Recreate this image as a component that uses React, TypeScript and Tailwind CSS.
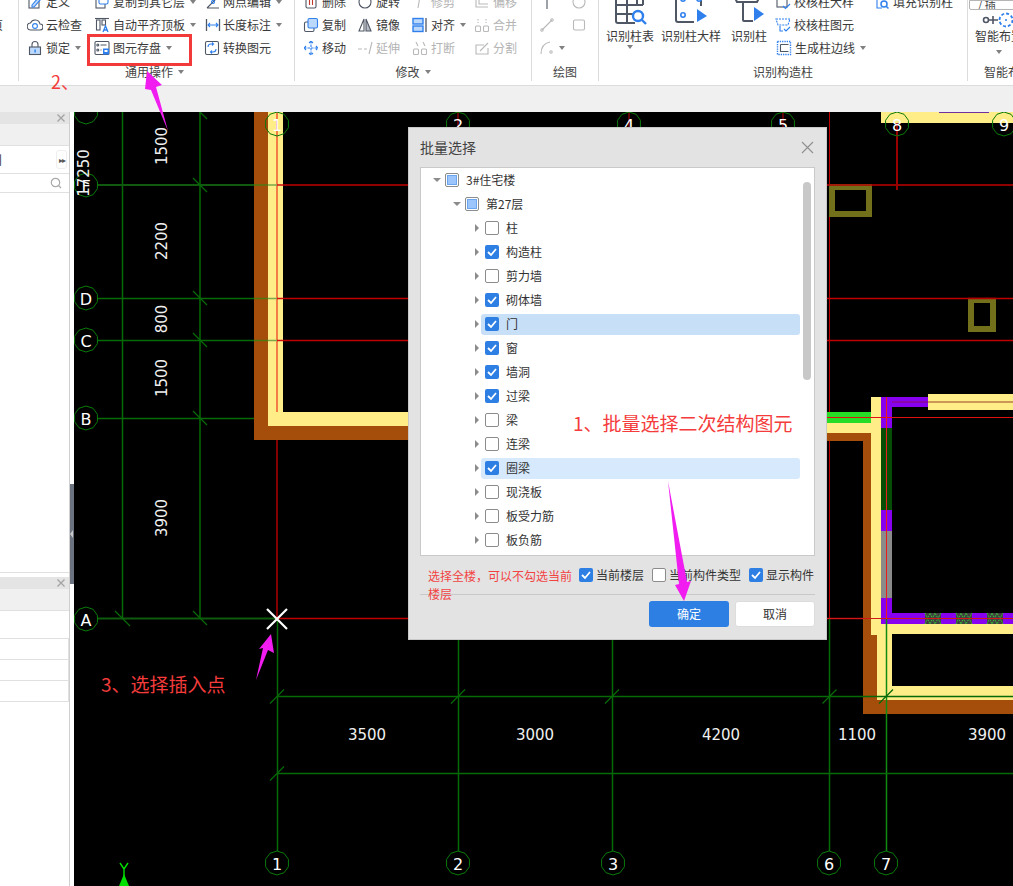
import type { ReactNode } from 'react';

const D = '#4f5764';
const B = '#2f80ed';
const L = '#bcd8fa';
const G = '#b9b9b9';
const GREEN = '#066a06';
const RED = '#c00000';

function Ic({ children, size = 16 }: { children: ReactNode; size?: number }) {
  return (
    <svg width={size} height={size} viewBox="0 0 16 16" fill="none" strokeWidth="1.1">
      {children}
    </svg>
  );
}

function Caret() {
  return <span className="ml-[5px] inline-block w-0 h-0 border-x-[3px] border-t-[4px] border-x-transparent border-t-[#808080]" />;
}

function Tool({ icon, label, caret, gray }: { icon?: ReactNode; label?: string; caret?: boolean; gray?: boolean }) {
  return (
    <div className="flex items-center h-[23px] whitespace-nowrap">
      <span className="w-[18px] h-[16px] mr-[2px] flex items-center justify-center">{icon}</span>
      <span className={gray ? 'text-[#b4b4b4]' : 'text-[#3a3a3a]'}>{label}</span>
      {caret && <Caret />}
    </div>
  );
}

function BigTool({ icon, label, w, caret, caretGap }: { icon: ReactNode; label: string; w: string; caret?: boolean; caretGap?: string }) {
  return (
    <div className={`${w} shrink-0 flex flex-col items-center whitespace-nowrap`}>
      <div className="h-[38px] shrink-0 flex items-end justify-center">{icon}</div>
      <div className="h-[16px] shrink-0 leading-[16px] text-[#3a3a3a]">{label}</div>
      {caret && (
        <div className={`h-[6px] shrink-0 flex justify-center -ml-[5px] ${caretGap ?? 'mt-[1px]'}`}>
          <Caret />
        </div>
      )}
    </div>
  );
}

function Group({ w, label, caret, children, last, labelClass }: { w: string; label?: string; caret?: boolean; children?: ReactNode; last?: boolean; labelClass?: string }) {
  return (
    <div className={`${w} shrink-0 h-[81px] ${last ? '' : 'border-r border-[#dcdcdc]'}`}>
      <div className="h-[59px] -mt-[10px] flex">{children}</div>
      <div className={`h-[26px] mt-[10px] flex items-center justify-center text-[#444] ${labelClass ?? ''}`}>
        {label}
        {caret && <Caret />}
      </div>
    </div>
  );
}

const icons = {
  define: <Ic><rect x="2" y="2" width="10" height="12" stroke={D} /><path d="M5 11l7-8 2 2-7 8H5z" stroke={B} fill={L} /></Ic>,
  cloud: <Ic><path d="M4 13a3.5 3.5 0 01-.5-7A5 5 0 0113 7a3 3 0 010 6z" stroke={D} /><circle cx="8" cy="9" r="2.4" stroke={B} /></Ic>,
  lock: <Ic><path d="M5 7V4.5a3 3 0 016 0V7" stroke={D} /><rect x="2.5" y="7" width="11" height="7.5" fill={L} stroke={D} /><rect x="7.4" y="9.5" width="1.4" height="3" fill={B} /></Ic>,
  copyLayer: <Ic><rect x="2" y="5" width="9" height="9" fill="#fff" stroke={D} /><rect x="5" y="1" width="9" height="9" rx="1.5" fill="#fff" stroke={B} /></Ic>,
  alignTop: <Ic><path d="M1 1.5h14" stroke={D} /><rect x="2.5" y="3" width="3.5" height="10" stroke={D} /><rect x="8" y="3" width="3.5" height="5" stroke={D} /><path d="M9 15l2.5-6 2.5 6M10 13h3" stroke={B} strokeWidth="1.3" /></Ic>,
  save: <Ic><rect x="1" y="1.5" width="14" height="13" rx="1" stroke={D} /><circle cx="3.8" cy="5" r="1" stroke={D} /><circle cx="3.8" cy="10" r="1" stroke={D} /><path d="M6.5 5h6M6.5 10h1" stroke={D} /><rect x="9" y="8.5" width="6" height="6" fill={B} /><rect x="10.5" y="10" width="3" height="2" fill="#fff" /></Ic>,
  axis: <Ic><path d="M2 14L14 2M2 14h12" stroke={D} /><circle cx="8" cy="8" r="1.5" stroke={B} /></Ic>,
  length: <Ic><path d="M1.5 2v12M14.5 2v12" stroke={D} strokeWidth="1.3" /><path d="M3 8h10M5 6L3 8l2 2M11 6l2 2-2 2" stroke={B} /></Ic>,
  convert: <Ic><rect x="1.5" y="1.5" width="13" height="13" rx="1.5" stroke={D} /><path d="M4 7a3 3 0 013-3h2M8 2.5L9.5 4 8 5.5M12 9a3 3 0 01-3 3H7M8 10.5L6.5 12 8 13.5" stroke={B} /></Ic>,
  del: <Ic><rect x="3" y="2" width="10" height="12" rx="1.5" stroke={D} /><path d="M6.5 4v7M9.5 4v7" stroke="#c0392b" /></Ic>,
  rotate: <Ic><circle cx="8" cy="8" r="6" stroke={D} /></Ic>,
  trim: <Ic><path d="M2 4h9M8 2l-2 12" stroke={G} /></Ic>,
  offset: <Ic><path d="M2 3v10h12M5 3v7h9" stroke={G} /></Ic>,
  copy: <Ic><rect x="1.5" y="5" width="9.5" height="9.5" rx="1.5" fill="#fff" stroke={D} /><rect x="5" y="1.5" width="9.5" height="9.5" rx="1.5" fill={L} stroke={B} /></Ic>,
  mirror: <Ic><path d="M7 2L2 14h5z" stroke={D} /><path d="M9 2l5 12H9z" fill="#b8bcc4" stroke={D} /></Ic>,
  align: <Ic><rect x="1" y="1.5" width="10" height="5.5" fill={L} stroke={B} strokeWidth="1.4" /><rect x="1" y="9" width="10" height="5.5" fill={L} stroke={B} strokeWidth="1.4" /><path d="M14 1v14" stroke={D} strokeWidth="1.3" /></Ic>,
  merge: <Ic><rect x="1.5" y="9" width="5" height="5.5" rx="1" stroke={G} /><rect x="9.5" y="9" width="5" height="5.5" rx="1" stroke={G} /><path d="M4 2v4M12 2v4" stroke={G} strokeDasharray="1.5 1.5" /></Ic>,
  move: <Ic><path d="M8 1v14M1 8h14M6 3l2-2 2 2M6 13l2 2 2-2M3 6L1 8l2 2M13 6l2 2-2 2" stroke={B} strokeDasharray="2.5 1" /></Ic>,
  extend: <Ic><path d="M1 9h4M7 9h3M15 2l-3 12" stroke={G} /></Ic>,
  breakIt: <Ic><rect x="1.5" y="9" width="5" height="5.5" rx="1" stroke={G} /><rect x="9.5" y="9" width="5" height="5.5" rx="1" stroke={G} /><path d="M4 2l2 4M11 2l2 4" stroke={G} /></Ic>,
  split: <Ic><path d="M14 8v6H2V5h8" stroke={G} /><path d="M6 11l8-8" stroke={G} /></Ic>,
  point: <Ic><path d="M1 3h14M8 1v14" stroke={D} /><circle cx="8" cy="3" r="2.2" fill={B} /></Ic>,
  circle: <Ic><circle cx="8" cy="8" r="6" stroke={G} /></Ic>,
  line: <Ic><path d="M3 13L13 3" stroke={G} /><circle cx="3" cy="13" r="1.2" stroke={G} /><circle cx="13" cy="3" r="1.2" stroke={G} /></Ic>,
  rect: <Ic><rect x="2.5" y="3" width="11" height="10" rx="1.5" stroke={G} /></Ic>,
  arc: <Ic><path d="M2 14C2 7 6 3 11 2" stroke={G} /><circle cx="12" cy="12" r="1.2" stroke={G} /></Ic>,
  checkBig: <Ic><rect x="2" y="2" width="10" height="11" stroke={D} /><path d="M8 12l2.5 2.5L15 10" stroke={B} /></Ic>,
  checkEl: <Ic><path d="M1 2h14l-2 6H3z" stroke={B} strokeDasharray="2 1" /><path d="M5 9v5h3M9 12l2 2 4-4" stroke={B} /></Ic>,
  edge: <Ic><rect x="1.5" y="1.5" width="13" height="13" stroke={B} strokeDasharray="1.3 1" strokeWidth="1.4" /><path d="M4.5 4.5h8M4.5 4.5v7h8" stroke={D} /></Ic>,
  fill: <Ic><path d="M3 1v13h5" stroke={B} /><circle cx="10" cy="10" r="3" stroke={B} strokeWidth="1.5" /><path d="M12 12l2.5 2.5" stroke={B} strokeWidth="1.5" /></Ic>,
};

const bigTable = (
  <svg width="34" height="34" viewBox="0 0 34 34" fill="none">
    <path d="M3 5h5" stroke={B} strokeWidth="2" />
    <path d="M3 5v22a2 2 0 002 2h17M3 11h27M3 20h17M14 1v28M24 1v10M30 1v10" stroke={D} strokeWidth="2" />
    <circle cx="25" cy="22" r="5" stroke={B} strokeWidth="2.4" />
    <path d="M29 26l4 4" stroke={B} strokeWidth="2.4" />
  </svg>
);

const bigDetail = (
  <svg width="34" height="34" viewBox="0 0 34 34" fill="none">
    <path d="M2 0v26a2 2 0 002 2h16M27 0v12" stroke={D} strokeWidth="2" />
    <circle cx="9" cy="5" r="2.2" stroke={B} strokeWidth="1.6" />
    <circle cx="25" cy="5" r="2.2" stroke={B} strokeWidth="1.6" />
    <circle cx="9" cy="21" r="2.2" stroke={B} strokeWidth="1.6" />
    <path d="M23 15l10 7-10 6z" fill={B} />
  </svg>
);

const bigColumn = (
  <svg width="34" height="34" viewBox="0 0 34 34" fill="none">
    <path d="M3 4l2 4h20l2-4M11 8v18a1 1 0 001 1h9" stroke={D} strokeWidth="2" />
    <path d="M22 13l10 7-10 7z" fill={B} />
  </svg>
);

const bigSmart = (
  <svg width="44" height="34" viewBox="0 0 44 34" fill="none">
    <circle cx="9" cy="26" r="2.5" stroke={D} strokeWidth="1.6" />
    <path d="M11 26h10M16 22v8" stroke={D} strokeWidth="1.6" />
    <circle cx="29" cy="26" r="6.5" stroke={B} strokeWidth="1.8" strokeDasharray="3 2" />
    <circle cx="29" cy="26" r="1" fill={B} />
  </svg>
);

function Ribbon() {
  return (
    <div className="relative h-[86px] shrink-0 flex overflow-hidden bg-white border-b border-[#dcdcdc]">
      <Group w="w-[19px]">
        <div className="flex flex-col">
          <div className="h-[23px]" />
          <div className="h-[23px] leading-[23px] -ml-[9px] text-[#3a3a3a]">页</div>
        </div>
      </Group>
      <Group w="w-[276px]" label="通用操作" caret labelClass="pr-[4px]">
        <div className="w-[67px] ml-[7px] shrink-0">
          <Tool icon={icons.define} label="定义" />
          <Tool icon={icons.cloud} label="云检查" />
          <Tool icon={icons.lock} label="锁定" caret />
        </div>
        <div className="w-[112px] shrink-0">
          <Tool icon={icons.copyLayer} label="复制到其它层" caret />
          <Tool icon={icons.alignTop} label="自动平齐顶板" caret />
          <Tool icon={icons.save} label="图元存盘" caret />
        </div>
        <div className="w-[70px] shrink-0">
          <Tool icon={icons.axis} label="网点编辑" caret />
          <Tool icon={icons.length} label="长度标注" caret />
          <div className="-ml-[2px]"><Tool icon={icons.convert} label="转换图元" /></div>
        </div>
      </Group>
      <Group w="w-[237px]" label="修改" caret>
        <div className="w-[54px] ml-[7px] shrink-0">
          <Tool icon={icons.del} label="删除" />
          <Tool icon={icons.copy} label="复制" />
          <Tool icon={icons.move} label="移动" />
        </div>
        <div className="w-[55px] shrink-0">
          <Tool icon={icons.rotate} label="旋转" />
          <Tool icon={icons.mirror} label="镜像" />
          <Tool icon={icons.extend} label="延伸" gray />
        </div>
        <div className="w-[62px] shrink-0">
          <Tool icon={icons.trim} label="修剪" gray />
          <Tool icon={icons.align} label="对齐" caret />
          <Tool icon={icons.breakIt} label="打断" gray />
        </div>
        <div className="w-[50px] shrink-0">
          <Tool icon={icons.offset} label="偏移" gray />
          <Tool icon={icons.merge} label="合并" gray />
          <Tool icon={icons.split} label="分割" gray />
        </div>
      </Group>
      <Group w="w-[67px]" label="绘图">
        <div className="w-[32px] ml-[6px] shrink-0">
          <Tool icon={icons.point} />
          <Tool icon={icons.line} />
          <div className="flex items-center">
            <Tool icon={icons.arc} />
            <span className="-ml-[4px] flex"><Caret /></span>
          </div>
        </div>
        <div className="w-[20px] shrink-0">
          <Tool icon={icons.circle} />
          <Tool icon={icons.rect} />
        </div>
      </Group>
      <Group w="w-[369px]" label="识别构造柱">
        <div className="flex pl-[7px]">
          <BigTool w="w-[48px]" icon={bigTable} label="识别柱表" caret />
          <div className="w-[7px] shrink-0" />
          <BigTool w="w-[60px]" icon={bigDetail} label="识别柱大样" />
          <div className="w-[10px] shrink-0" />
          <BigTool w="w-[36px]" icon={bigColumn} label="识别柱" />
          <div className="w-[7px] shrink-0" />
        </div>
        <div className="w-[99px] shrink-0">
          <Tool icon={icons.checkBig} label="校核柱大样" />
          <Tool icon={icons.checkEl} label="校核柱图元" />
          <div className="ml-[1px]"><Tool icon={icons.edge} label="生成柱边线" caret /></div>
        </div>
        <div className="shrink-0">
          <Tool icon={icons.fill} label="填充识别柱" />
        </div>
      </Group>
      <Group w="w-[46px]" last>
        <div className="pl-[7px]">
          <BigTool w="w-[48px]" icon={bigSmart} label="智能布置" caret caretGap="mt-[6px]" />
        </div>
      </Group>
      <div className="absolute left-[969px] top-0 w-[60px] h-[10px] bg-white border border-[#b5b5b5] rounded-b-[2px] text-[11px] leading-[6px] pl-[8px] text-[#444] overflow-hidden">/ 插</div>
      <div className="absolute left-[984px] top-[61px] h-[22px] leading-[22px] whitespace-nowrap text-[#444]">智能布置</div>
    </div>
  );
}

function CloseX({ className }: { className: string }) {
  return (
    <svg width="10" height="10" viewBox="0 0 10 10" className={className}>
      <path d="M1.5 1.5l7 7M8.5 1.5l-7 7" stroke="#a3a3a3" strokeWidth="1.3" />
    </svg>
  );
}

function Sidebar() {
  return (
    <div className="w-[74px] shrink-0 relative bg-white">
      <div className="w-[70px] h-full border-r border-[#cfcfcf] flex flex-col">
        <div className="h-[461px] flex flex-col border-b border-[#e0e0e0]">
          <div className="h-[12px] bg-[#e4e4e4] relative shrink-0">
            <CloseX className="absolute right-[3px] top-[1px]" />
          </div>
          <div className="h-[22px] bg-[#f0f0f0] border-b border-[#e0e0e0] shrink-0" />
          <div className="h-[28px] border-b border-[#e0e0e0] shrink-0 flex items-center justify-between overflow-hidden">
            <span className="-ml-[10px] text-[#333]">则</span>
            <span className="w-[11px] h-[19px] mr-[2px] border border-[#eeeeee] rounded-[3px] flex items-center justify-center text-[8px] tracking-[-1px] text-[#555]">▸▸</span>
          </div>
          <div className="h-[19px] border-b border-[#e0e0e0] shrink-0 flex items-center justify-end pr-[7px]">
            <svg width="12" height="12" viewBox="0 0 12 12" fill="none">
              <circle cx="5.5" cy="5.5" r="4.2" stroke="#aaa" strokeWidth="1.2" />
              <path d="M8.5 8.5L11 11" stroke="#aaa" strokeWidth="1.2" />
            </svg>
          </div>
        </div>
        <div className="h-[4px] shrink-0" />
        <div className="h-[12px] bg-[#e4e4e4] relative shrink-0">
          <CloseX className="absolute right-[3px] top-[1px]" />
        </div>
        <div className="h-[22px] bg-[#f0f0f0] border-b border-[#e0e0e0] shrink-0" />
        <div className="h-[28px] border-b border-[#e0e0e0] w-[69px] shrink-0" />
        <div className="h-[21px] border-b border-r border-[#e0e0e0] shrink-0 w-[69px]" />
        <div className="h-[21px] border-b border-r border-[#e0e0e0] shrink-0 w-[69px]" />
        <div className="h-[21px] border-b border-r border-[#e0e0e0] shrink-0 w-[69px]" />
      </div>
      <div className="absolute left-[70px] top-[372px] w-[4px] h-[100px] bg-[#6b7380] flex items-center">
        <span className="w-0 h-0 border-y-[4px] border-r-[3px] border-y-transparent border-r-[#c8c8c8]" />
      </div>
    </div>
  );
}

function Axis({ x, y, t, size = 16 }: { x: number; y: number; t: string; size?: number }) {
  const pts = Array.from({ length: 10 }, (_, i) => {
    const a = (Math.PI / 5) * i + Math.PI / 10;
    return `${x + 12 * Math.cos(a)},${y + 12 * Math.sin(a)}`;
  }).join(' ');
  return (
    <g>
      <polygon points={pts} fill="none" stroke="#0a7a0a" strokeWidth="1" />
      <text x={x} y={y + 1} fill="#fff" fontSize={size} fontFamily="'DejaVu Sans', sans-serif" textAnchor="middle" dominantBaseline="central">{t}</text>
    </g>
  );
}

function Dim({ x, y, t, vertical }: { x: number; y: number; t: string; vertical?: boolean }) {
  return (
    <text
      x={x}
      y={y}
      fill="#f0f0f0"
      fontSize="15"
      fontFamily="'DejaVu Sans', sans-serif"
      textAnchor="middle"
      dominantBaseline="central"
      transform={vertical ? `rotate(-90 ${x} ${y})` : undefined}
    >
      {t}
    </text>
  );
}

function Hatch({ x }: { x: number }) {
  return (
    <g>
      <rect x={x} y="613" width="16" height="11" fill="#404040" />
      <path d={`M${x} 613l5 11 5-11 6 11M${x} 624l5-11 5 11 6-11`} stroke="#35d035" strokeWidth="1" strokeDasharray="1.5 1" fill="none" />
    </g>
  );
}

function Drawing() {
  const leftTicks = [112, 185, 298, 340, 418, 618];
  const bottomX = [277, 458, 612, 829.5, 886];
  return (
    <svg viewBox="74 112 939 774" className="absolute inset-0 w-full h-full">
      {/* left dimension lines */}
      <path d="M122.5 112V619M200 112V619M97 298.5H277M97 340.5H277M97 418.5H277" stroke={GREEN} strokeWidth="1.5" />
      <path d="M97 185H277M97 618.5H277" stroke="#0f5a0f" strokeWidth="2" />
      {leftTicks.map((y) => (
        <path key={y} d={`M193 ${y - 7}L207 ${y + 7}`} stroke={GREEN} strokeWidth="1.2" />
      ))}
      <path d="M115 611L130 626" stroke={GREEN} strokeWidth="1.2" />

      {/* red axes */}
      <path d="M277 185H1013M277 298.5H1013M277 340.5H1013M277 618.5H1013" stroke={RED} strokeWidth="1.5" />
      <path d="M458 112V130M629 112V130M783 112V130M829.5 112V619" stroke={RED} strokeWidth="1" />
      <path d="M277 412V619" stroke="#b00000" strokeWidth="1.5" />
      <path d="M897 112V190" stroke="#9a0000" strokeWidth="2" />

      {/* left wall */}
      <rect x="254" y="112" width="14" height="328" fill="#a54d0b" />
      <rect x="254" y="426" width="160" height="14" fill="#a54d0b" />
      <rect x="268" y="112" width="15" height="314" fill="#ffee88" />
      <rect x="268" y="412" width="146" height="14" fill="#ffee88" />
      <path d="M277 112V412" stroke="#ef4023" strokeWidth="1.3" />
      <path d="M277 185H283M277 298.5H283M277 340.5H283" stroke="#d01010" strokeWidth="1.5" />
      <path d="M268 185H277M268 298.5H277M268 340.5H277" stroke="#7aa84a" strokeWidth="1.5" />
      <path d="M254 185H268M254 298.5H268M254 340.5H268" stroke="#4f7a10" strokeWidth="1.5" />

      {/* top right wall */}
      <rect x="881" y="112" width="132" height="11" fill="#ffee88" />
      <path d="M939 112.5H989" stroke="#7030a0" strokeWidth="1.2" />

      {/* olive openings */}
      <path fillRule="evenodd" d="M829 184H872V217H829ZM835 190V211H866V190Z" fill="#72701a" />
      <path fillRule="evenodd" d="M968 298H996V332H968ZM974 303V326H990V303Z" fill="#72701a" />
      <path d="M829 185H872M968 298.5H996" stroke="#b00000" strokeWidth="1.5" />

      {/* right rooms */}
      <rect x="827" y="412" width="44" height="11" fill="#26dc26" />
      <rect x="827" y="423" width="44" height="10" fill="#ffee88" />
      <rect x="827" y="433" width="44" height="8" fill="#a54d0b" />
      <rect x="863" y="441" width="8" height="194" fill="#a54d0b" />
      <rect x="863" y="634" width="14" height="80" fill="#a54d0b" />
      <rect x="863" y="700" width="150" height="14" fill="#a54d0b" />
      <rect x="871" y="397" width="10" height="238" fill="#ffee88" />
      <rect x="871" y="624" width="142" height="10" fill="#ffee88" />
      <rect x="877" y="634" width="15" height="66" fill="#ffee88" />
      <rect x="877" y="686" width="136" height="14" fill="#ffee88" />
      <rect x="928" y="394" width="85" height="16" fill="#ffee88" />
      <path d="M928 402H1013" stroke="#b97a45" strokeWidth="1.6" />
      <rect x="881" y="397" width="47" height="10" fill="#8800f0" />
      <path d="M887 402H928" stroke="#8a0a90" strokeWidth="1.6" />
      <rect x="881" y="397" width="11" height="31" fill="#8800f0" />
      <rect x="881" y="428" width="11" height="82" fill="#064d06" />
      <rect x="881" y="510" width="11" height="21" fill="#8800f0" />
      <rect x="881" y="531" width="11" height="67" fill="#8a8a8a" />
      <rect x="881" y="598" width="11" height="26" fill="#8800f0" />
      <rect x="881" y="613" width="132" height="11" fill="#8800f0" />
      <Hatch x={925} />
      <Hatch x={956} />
      <Hatch x={987} />
      <path d="M827 417.5H1013" stroke="#e01010" strokeWidth="1" />
      <path d="M827 618.5H1013" stroke="#d01818" strokeWidth="1" />
      <path d="M886.5 397V619" stroke="#ea1c1c" strokeWidth="1" />

      {/* lower grid */}
      <path d="M277.5 619V851M458.5 640V851M612.5 640V851M829.5 619V851" stroke={GREEN} strokeWidth="1.5" />
      <path d="M886.5 619V851" stroke="#118a11" strokeWidth="1.5" />
      <path d="M277 696.5H1013M277 773.5H1013" stroke={GREEN} strokeWidth="1.5" />
      {bottomX.map((x) => (
        <path key={x} d={`M${x - 7} 703.5L${x + 7} 689.5`} stroke={GREEN} strokeWidth="1.2" />
      ))}
      <path d="M270 780.5L284 766.5" stroke={GREEN} strokeWidth="1.2" />

      <Dim x={162} y={146} t="1500" vertical />
      <Dim x={162} y={241} t="2200" vertical />
      <Dim x={162} y={319} t="800" vertical />
      <Dim x={162} y={378} t="1500" vertical />
      <Dim x={162} y={518} t="3900" vertical />
      <Axis x={86} y={112} t="" />
      <Axis x={86} y={185} t="F" />
      <Dim x={84} y={173} t="17250" vertical />
      <Axis x={86} y={298} t="D" />
      <Axis x={86} y={340} t="C" />
      <Axis x={86} y={418} t="B" />
      <Axis x={86} y={619} t="A" />
      <Axis x={277} y={124} t="1" />
      <Axis x={458} y={124} t="2" />
      <Axis x={629} y={124} t="4" />
      <Axis x={783} y={124} t="5" />
      <Axis x={897} y={124} t="8" />
      <Axis x={1004} y={124} t="9" />
      <Axis x={277} y={863} t="1" />
      <Axis x={458} y={863} t="2" />
      <Axis x={613} y={863} t="3" />
      <Axis x={829} y={863} t="6" />
      <Axis x={886} y={863} t="7" />
      <Dim x={367} y={735} t="3500" />
      <Dim x={535} y={735} t="3000" />
      <Dim x={721} y={735} t="4200" />
      <Dim x={857} y={735} t="1100" />
      <Dim x={987} y={735} t="3900" />

      {/* insert cursor */}
      <path d="M267 609L287 629M287 609L267 629" stroke="#fff" strokeWidth="2.2" />
      {/* ucs marker */}
      <path d="M120 863L124 869L128 863M124 869V876" stroke="#00e000" strokeWidth="1.4" fill="none" />
      <path d="M124 874L119 886H129Z" fill="#00e000" />
    </svg>
  );
}

function Check({ state }: { state: 'on' | 'off' | 'part' }) {
  if (state === 'on') {
    return (
      <span className="w-[14px] h-[14px] shrink-0 rounded-[2px] bg-[#2d7fe3] flex items-center justify-center">
        <svg width="10" height="10" viewBox="0 0 10 10" fill="none">
          <path d="M1 5l3 3 5-6" stroke="#fff" strokeWidth="1.8" />
        </svg>
      </span>
    );
  }
  if (state === 'part') {
    return (
      <span className="w-[14px] h-[14px] shrink-0 rounded-[2px] border border-[#8c8c8c] bg-white flex items-center justify-center">
        <span className="w-[10px] h-[10px] bg-[#9cc6fb] border border-[#6aa5f0]" />
      </span>
    );
  }
  return <span className="w-[14px] h-[14px] shrink-0 rounded-[2px] border border-[#8c8c8c] bg-white" />;
}

const rows: { label: string; level: 0 | 1 | 2; state: 'on' | 'off' | 'part'; hl?: string }[] = [
  { label: '3#住宅楼', level: 0, state: 'part' },
  { label: '第27层', level: 1, state: 'part' },
  { label: '柱', level: 2, state: 'off' },
  { label: '构造柱', level: 2, state: 'on' },
  { label: '剪力墙', level: 2, state: 'off' },
  { label: '砌体墙', level: 2, state: 'on' },
  { label: '门', level: 2, state: 'on', hl: 'bg-[#c8dff8]' },
  { label: '窗', level: 2, state: 'on' },
  { label: '墙洞', level: 2, state: 'on' },
  { label: '过梁', level: 2, state: 'on' },
  { label: '梁', level: 2, state: 'off' },
  { label: '连梁', level: 2, state: 'off' },
  { label: '圈梁', level: 2, state: 'on', hl: 'bg-[#d7e9fc]' },
  { label: '现浇板', level: 2, state: 'off' },
  { label: '板受力筋', level: 2, state: 'off' },
  { label: '板负筋', level: 2, state: 'off' },
];

const indent = { 0: 'pl-[12px]', 1: 'pl-[32px]', 2: 'pl-[52px]' };

function TreeRow({ label, level, state, hl }: (typeof rows)[number]) {
  return (
    <div className={`h-[24px] flex items-center ${indent[level]}`}>
      <span className="w-[8px] flex justify-center shrink-0">
        {level === 2 ? (
          <span className="w-0 h-0 border-y-[4px] border-l-[4px] border-y-transparent border-l-[#8c8c8c]" />
        ) : (
          <span className="w-0 h-0 border-x-[4px] border-t-[4px] border-x-transparent border-t-[#8c8c8c]" />
        )}
      </span>
      <div className={`flex-1 mr-[14px] h-[21px] pl-[4px] flex items-center gap-[7px] rounded-[3px] ${hl ?? ''}`}>
        <Check state={state} />
        <span className="text-[#333]">{label}</span>
      </div>
    </div>
  );
}

function Opt({ state, label, w }: { state: 'on' | 'off'; label: string; w: string }) {
  return (
    <div className={`${w} h-[14px] flex items-center gap-[3px] whitespace-nowrap shrink-0`}>
      <Check state={state} />
      <span className="text-[#333]">{label}</span>
    </div>
  );
}

function BatchDialog() {
  return (
    <div className="absolute left-[334px] top-[15px] w-[419px] h-[513px] bg-[#e3e3e3] border border-[#c9c9c9] px-[11px]">
      <div className="h-[39px] flex items-center justify-between">
        <span className="text-[14px] text-[#444]">批量选择</span>
        <svg width="13" height="13" viewBox="0 0 13 13" className="mr-[1px]">
          <path d="M1 1l11 11M12 1L1 12" stroke="#8f8f8f" strokeWidth="1.1" />
        </svg>
      </div>
      <div className="relative h-[389px] bg-white border border-[#c9c9c9] overflow-hidden">
        {rows.map((r) => (
          <TreeRow key={r.label} {...r} />
        ))}
        <div className="absolute left-[382px] top-[14px] w-[8px] h-[198px] rounded-[4px] bg-[#c8c8c8]" />
      </div>
      <div className="h-[39px] border-b border-[#c9c9c9] flex items-start pt-[12px]">
        <div className="w-[159px] pl-[8px] -mt-[1px] shrink-0 text-[#f24343] leading-[18px]">
          选择全楼，可以不勾选当前楼层
        </div>
        <Opt state="on" label="当前楼层" w="w-[73px]" />
        <Opt state="off" label="当前构件类型" w="w-[97px]" />
        <Opt state="on" label="显示构件" w="w-[66px]" />
      </div>
      <div className="flex justify-end gap-[6px] pt-[6px]">
        <button className="w-[80px] h-[26px] rounded-[3px] bg-[#2d7fe3] text-white">确定</button>
        <button className="w-[80px] h-[26px] rounded-[3px] bg-white border border-[#dcdcdc] text-[#333]">取消</button>
      </div>
    </div>
  );
}

export default function App() {
  return (
    <div className="relative w-[1013px] h-[886px] overflow-hidden flex flex-col bg-white text-[12px] [font-family:'Noto_Sans_CJK_SC',sans-serif]">
      <Ribbon />
      <div className="h-[26px] shrink-0 bg-[#f0f0f0]" />
      <div className="flex-1 flex min-h-0">
        <Sidebar />
        <div className="flex-1 relative bg-black">
          <Drawing />
          <BatchDialog />
        </div>
      </div>

      {/* screenshot annotations */}
      <div className="absolute left-[87px] top-[34px] w-[105px] h-[32px] border-[3px] border-[#f23a3a]" />
      <span className="absolute left-[51px] top-[68px] text-[18px] leading-[26px] text-[#f43c3c]">2、</span>
      <span className="absolute left-[573px] top-[410px] text-[19px] leading-[26px] text-[#f43c3c] whitespace-nowrap">1、批量选择二次结构图元</span>
      <span className="absolute left-[101px] top-[671px] text-[19px] leading-[26px] text-[#f43c3c] whitespace-nowrap">3、选择插入点</span>
      <svg viewBox="0 0 1013 886" className="absolute inset-0 w-full h-full pointer-events-none">
        <polygon points="147,71 162,85 156,87 168,131 151,90 145,89" fill="#f01cf0" />
        <polygon points="668,481 687,582 691,581 684,601 675,585 679,584" fill="#f01cf0" />
        <polygon points="271,634 274,653 268,650 256,680 263,648 259,649" fill="#f01cf0" />
      </svg>
    </div>
  );
}
